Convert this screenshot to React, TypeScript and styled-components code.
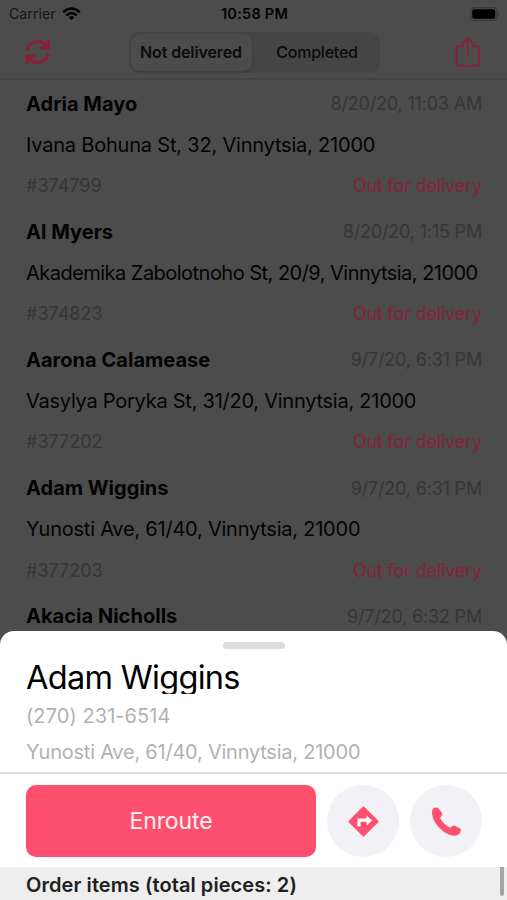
import React from "react";
import styled, { createGlobalStyle } from "styled-components";

const dim = { bg: "#4c4c4c", text: "#030303", muted: "#363636", accent: "#87213a", line: "#444444" };
const pink = "#ff4f6f";

const GlobalStyle = createGlobalStyle`
  * { box-sizing: border-box; }
  body { margin: 0; font-family: Inter, "Liberation Sans", sans-serif; }
`;

const Screen = styled.main`
  position: relative;
  width: 507px;
  height: 900px;
  overflow: hidden;
  background: ${dim.bg};
  color: ${dim.text};
`;

const StatusBar = styled.header`
  display: grid;
  grid-template-columns: 1fr auto 1fr;
  align-items: center;
  height: 27px;
  padding: 0 7px 0 9px;
`;
const Carrier = styled.span`
  display: flex;
  align-items: center;
  gap: 6px;
  font-size: 14px;
  letter-spacing: 0.1px;
  color: #161616;
`;
const Clock = styled.span`
  font-size: 14.5px;
  font-weight: 600;
  letter-spacing: 0.25px;
`;
const BatterySlot = styled.span`
  display: flex;
  justify-content: flex-end;
`;

const NavBar = styled.nav`
  display: flex;
  align-items: center;
  justify-content: space-between;
  height: 52.7px;
  padding: 0 24px 0 23px;
  border-bottom: 2px solid ${dim.line};
`;
const IconButton = styled.button`
  display: flex;
  padding: 0;
  border: 0;
  background: none;
  color: ${dim.accent};
`;
const Segmented = styled.div`
  display: grid;
  grid-template-columns: 121px 1fr;
  width: 251px;
  height: 41px;
  padding: 2px;
  margin-left: 2px;
  border-radius: 11px;
  background: #454545;
`;
const Segment = styled.button<{ $active?: boolean }>`
  padding: ${(p) => (p.$active ? "0" : "0 0 0 5px")};
  border: 0;
  border-radius: 9px;
  background: ${(p) => (p.$active ? dim.bg : "transparent")};
  box-shadow: ${(p) => (p.$active ? "0 2px 5px rgba(0,0,0,.12)" : "none")};
  font: ${(p) => (p.$active ? 600 : 500)} 16px Inter, sans-serif;
  letter-spacing: ${(p) => (p.$active ? "-0.12px" : "-0.22px")};
  color: #0b0b0b;
`;

const Order = styled.article`
  display: grid;
  grid-template-rows: 41px 41px 41px;
  align-items: center;
  height: 128.2px;
  padding: 3.4px 25px 0 26px;
  white-space: nowrap;
`;
const Line = styled.div`
  display: flex;
  justify-content: space-between;
  align-items: center;
`;
const Name = styled.strong`
  font-size: 20px;
  font-weight: 700;
  letter-spacing: 0.03px;
`;
const Muted = styled.span<{ $tracking?: number }>`
  font-size: 18px;
  letter-spacing: ${(p) => p.$tracking ?? -0.18}px;
  color: ${dim.muted};
`;
const Address = styled.div<{ $tracking: number }>`
  font-size: 20px;
  letter-spacing: ${(p) => p.$tracking}px;
`;
const Status = styled.span`
  font-size: 18px;
  letter-spacing: -0.17px;
  color: ${dim.accent};
`;
const Separator = styled.hr`
  height: 1px;
  margin: -2px 0 1px 26px;
  border: 0;
  background: #494949;
`;

const Sheet = styled.section`
  position: absolute;
  left: 0;
  right: 0;
  bottom: 0;
  height: 269px;
  border-radius: 14px 14px 0 0;
  overflow: hidden;
  background: #fff;
  display: flex;
  flex-direction: column;
`;
const Grip = styled.div`
  flex: none;
  width: 62px;
  height: 7px;
  margin: 11px auto 0;
  border-radius: 4px;
  background: #dcdcdc;
`;
const Contact = styled.div`
  flex: none;
  height: 125px;
  padding: 11px 26px 0;
  border-bottom: 2px solid #dcdcdc;
  white-space: nowrap;
`;
const Title = styled.h1`
  height: 34px;
  margin: 0;
  overflow: hidden;
  font-size: 32.5px;
  line-height: 36px;
  font-weight: 400;
  letter-spacing: -0.7px;
  color: #000;
`;
const Detail = styled.p<{ $tracking: number }>`
  margin: 0;
  padding-top: 5px;
  font-size: 20px;
  line-height: 35px;
  height: 35.5px;
  letter-spacing: ${(p) => p.$tracking}px;
  color: #b2b2b2;
`;
const Actions = styled.div`
  display: flex;
  flex: none;
  gap: 11px;
  height: 93px;
  padding: 11px 25px 0 26px;
`;
const Primary = styled.button`
  flex: 1;
  height: 72px;
  padding: 0;
  border: 0;
  border-radius: 10px;
  background: ${pink};
  color: #fff0f2;
  font: 400 23px Inter, sans-serif;
  letter-spacing: -0.1px;
`;
const Round = styled.button`
  display: flex;
  align-items: center;
  justify-content: center;
  width: 72px;
  height: 72px;
  padding: 0;
  border: 0;
  border-radius: 50%;
  background: #f1f1f6;
  color: ${pink};
`;
const Items = styled.div`
  display: flex;
  flex: 1;
  justify-content: space-between;
  padding: 0 3px 0 26px;
  background: #eeeeee;
`;
const ItemsTitle = styled.h2`
  margin: 0;
  font-size: 20px;
  line-height: 36px;
  font-weight: 600;
  letter-spacing: 0.07px;
  color: #202020;
`;
const Thumb = styled.div`
  width: 4px;
  height: 29px;
  border-radius: 0 0 2px 2px;
  background: #a5a5a5;
`;

const Wifi = () => (
  <svg width="19" height="14" viewBox="0 0 19 14" fill="none" stroke="#050505" strokeWidth="2.5">
    <path d="M1.2 5.2Q9.5-2.2 17.8 5.2M4.3 8.4Q9.5 3.8 14.7 8.4" />
    <path d="M9.5 13.2 6.6 10.2Q9.5 7.8 12.4 10.2Z" fill="#050505" stroke="none" />
  </svg>
);
const Battery = () => (
  <svg width="30" height="14" viewBox="0 0 30 14">
    <rect x="0.7" y="0.7" width="26" height="12.6" rx="3.6" fill="none" stroke="#3a3a3a" strokeWidth="1.2" />
    <rect x="2.2" y="2.2" width="23" height="9.6" rx="2" fill="#000" />
    <path d="M28 4.8Q30.6 7 28 9.2Z" fill="#343434" />
  </svg>
);
const Refresh = () => (
  <svg width="30" height="30" viewBox="0 0 30 30" fill="none" stroke="currentColor" strokeWidth="3.2">
    <path d="M4.2 13.6A10.6 10.6 0 0 1 22.6 8" />
    <path d="M25.4 2.5V10.8H16.5" />
    <path d="M19.5 11 26 4.5V11Z" fill="currentColor" stroke="none" />
    <path d="M25.4 16.4A10.6 10.6 0 0 1 7 22" />
    <path d="M4.2 27.5V19.2H13.1" />
    <path d="M10.1 19 3.6 25.5V19Z" fill="currentColor" stroke="none" />
  </svg>
);
const Share = () => (
  <svg width="30" height="32" viewBox="0 0 30 32" fill="none" stroke="currentColor" strokeWidth="1.9" strokeLinecap="round" strokeLinejoin="round">
    <path d="M10.3 10.3H6.2Q3.5 10.3 3.5 13V26.5Q3.5 29.8 6.8 29.8H22.5Q25.8 29.8 25.8 26.5V13Q25.8 10.3 23.1 10.3H19" />
    <path d="M14.7 20V2.4M9.8 7 14.7 2.2 19.6 7" />
  </svg>
);
const Directions = () => (
  <svg width="31" height="31" viewBox="0 0 31 31">
    <path d="M15.5 1.5 29.5 15.5 15.5 29.5 1.5 15.5Z" fill="currentColor" stroke="currentColor" strokeWidth="2" strokeLinejoin="round" />
    <path d="M9.4 20.2V12.6H18.6V9.4L24 14.4 18.6 19.4V15.7H12.6V20.2Z" fill="#fff" />
  </svg>
);
const Phone = () => (
  <svg width="29" height="29" viewBox="0 0 29 29" fill="currentColor">
    <path d="M1.5 1Q4.5-.3 6.5 1.2L10 6Q10.8 7.3 9.8 8.5L8 11Q11.5 17.5 18.3 20.8L20.3 19Q21.5 18 22.8 18.7L28 21.5Q29.3 22.3 28.8 24Q27.5 28.7 22 28.7Q14 28 7 20.5Q0 13 0 5.5Q0 2.3 1.5 1Z" />
  </svg>
);

const orders = [
  { name: "Adria Mayo", time: "8/20/20, 11:03 AM", address: "Ivana Bohuna St, 32, Vinnytsia, 21000", id: "#374799", tracking: -0.2 },
  { name: "Al Myers", time: "8/20/20, 1:15 PM", address: "Akademika Zabolotnoho St, 20/9, Vinnytsia, 21000", id: "#374823", tracking: -0.525 },
  { name: "Aarona Calamease", time: "9/7/20, 6:31 PM", address: "Vasylya Poryka St, 31/20, Vinnytsia, 21000", id: "#377202", tracking: -0.25 },
  { name: "Adam Wiggins", time: "9/7/20, 6:31 PM", address: "Yunosti Ave, 61/40, Vinnytsia, 21000", id: "#377203", tracking: -0.23 },
  { name: "Akacia Nicholls", time: "9/7/20, 6:32 PM", address: "", id: "", tracking: 0 },
];

export default function App() {
  return (
    <Screen>
      <GlobalStyle />
      <StatusBar>
        <Carrier>Carrier <Wifi /></Carrier>
        <Clock>10:58 PM</Clock>
        <BatterySlot><Battery /></BatterySlot>
      </StatusBar>
      <NavBar>
        <IconButton aria-label="Refresh"><Refresh /></IconButton>
        <Segmented>
          <Segment $active>Not delivered</Segment>
          <Segment>Completed</Segment>
        </Segmented>
        <IconButton aria-label="Share"><Share /></IconButton>
      </NavBar>
      {orders.map((o) => (
        <React.Fragment key={o.name}>
          <Order>
            <Line><Name>{o.name}</Name><Muted>{o.time}</Muted></Line>
            <Address $tracking={o.tracking}>{o.address}</Address>
            {o.id && <Line><Muted $tracking={0}>{o.id}</Muted><Status>Out for delivery</Status></Line>}
          </Order>
          <Separator />
        </React.Fragment>
      ))}
      <Sheet>
        <Grip />
        <Contact>
          <Title>Adam Wiggins</Title>
          <Detail $tracking={0.07}>(270) 231-6514</Detail>
          <Detail $tracking={-0.23}>Yunosti Ave, 61/40, Vinnytsia, 21000</Detail>
        </Contact>
        <Actions>
          <Primary>Enroute</Primary>
          <Round aria-label="Directions"><Directions /></Round>
          <Round aria-label="Call"><Phone /></Round>
        </Actions>
        <Items>
          <ItemsTitle>Order items (total pieces: 2)</ItemsTitle>
          <Thumb />
        </Items>
      </Sheet>
    </Screen>
  );
}
